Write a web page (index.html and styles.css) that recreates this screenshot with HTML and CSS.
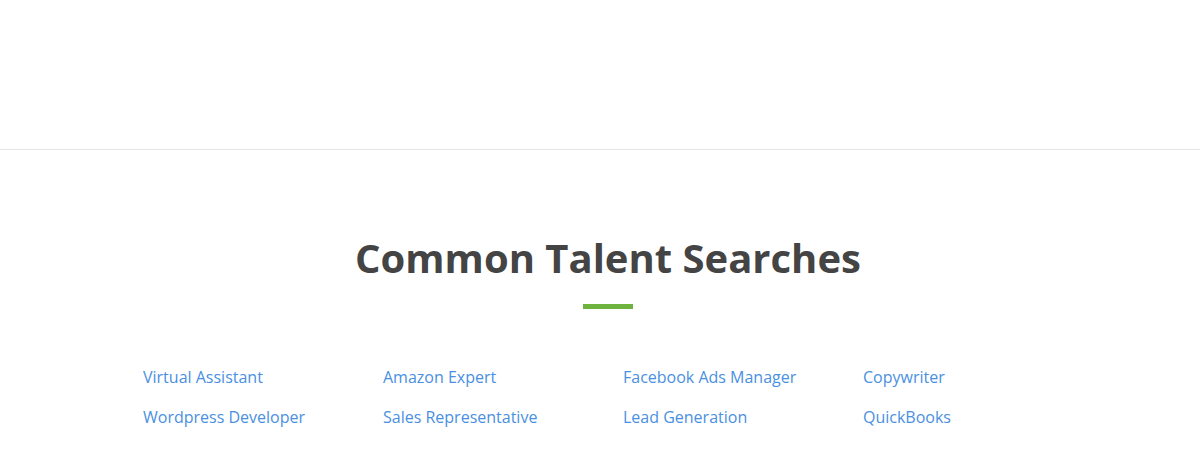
FILE: index.html
```html
<!DOCTYPE html>
<html lang="en">
<head>
<meta charset="utf-8">
<title>Common Talent Searches</title>
<link rel="stylesheet" href="styles.css">
</head>
<body>
<div class="top"></div>
<section class="searches">
  <h2 class="title">Common Talent Searches</h2>
  <div class="bar"></div>
  <ul class="grid">
    <li><a href="#">Virtual Assistant</a></li>
    <li><a href="#">Amazon Expert</a></li>
    <li><a href="#">Facebook Ads Manager</a></li>
    <li><a href="#">Copywriter</a></li>
    <li><a href="#">Wordpress Developer</a></li>
    <li><a href="#">Sales Representative</a></li>
    <li><a href="#">Lead Generation</a></li>
    <li><a href="#">QuickBooks</a></li>
  </ul>
</section>
</body>
</html>
```
FILE: styles.css
```css
html, body {
  margin: 0;
  padding: 0;
  background: #ffffff;
  font-family: "Open Sans", "Liberation Sans", sans-serif;
}
.top {
  height: 149px;
  border-bottom: 1px solid #e6e6e6;
}
.searches {
  padding: 84px 0 0 16px;
}
.title {
  margin: 0;
  text-align: center;
  font-size: 40px;
  line-height: 48px;
  font-weight: 700;
  color: #444444;
}
.bar {
  width: 50px;
  height: 5px;
  margin: 22px auto 0;
  background: #6fb33f;
}
.grid {
  list-style: none;
  margin: 48px 0 0 127px;
  padding: 0;
  display: grid;
  grid-template-columns: repeat(4, 240px);
}
.grid li {
  font-size: 16px;
  line-height: 40px;
}
.grid a {
  color: #4a90e2;
  text-decoration: none;
}
```
